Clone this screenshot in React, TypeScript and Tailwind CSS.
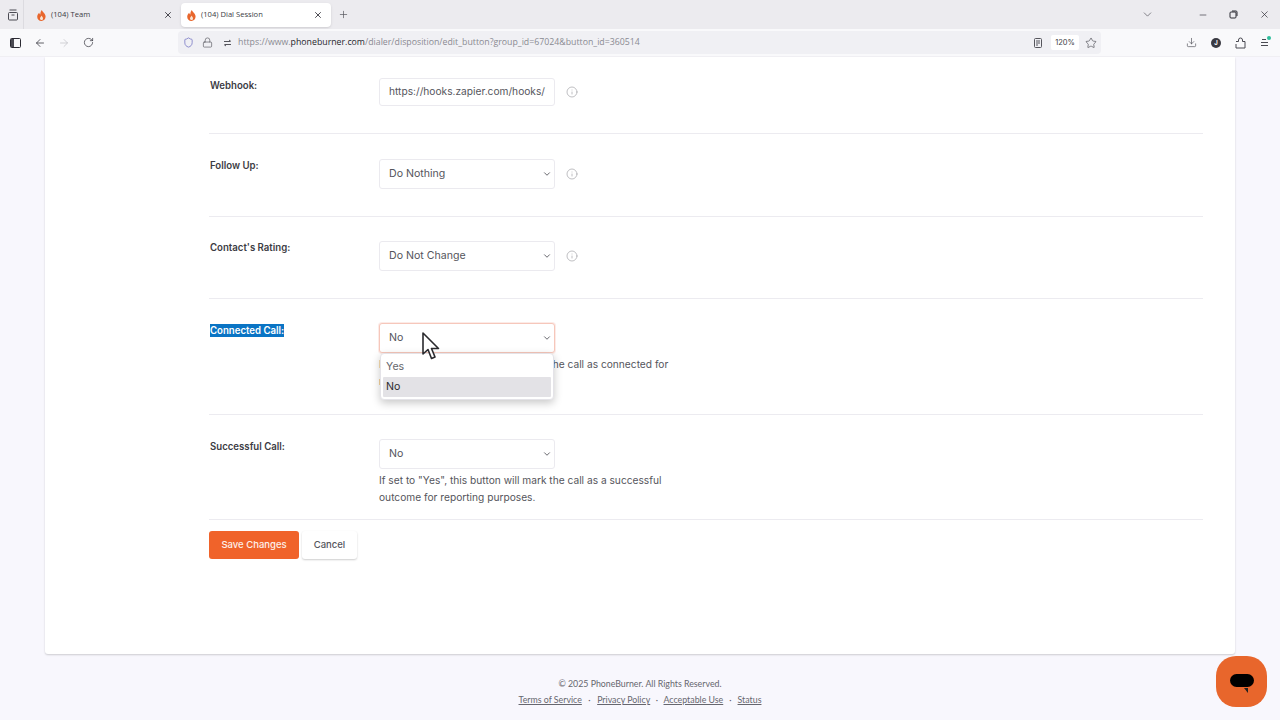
import React from "react";
import { X, Plus, ArrowLeft, ArrowRight, RotateCw, Lock, Star, Download, ChevronDown, Minus, Info, ShieldIcon as Shield } from "lucide-react";

const Flame = () => (
  <svg width="9" height="11" viewBox="0 0 9 11" className="shrink-0">
    <path d="M4.8 0C5 1.6 8.6 3.4 8.6 6.6 8.6 9.2 6.8 11 4.4 11 2 11 .2 9.2.2 6.8.2 5 1.2 3.8 2.2 2.8 2.4 3.8 2.8 4.2 3.4 4.4 3.2 2.8 3.8 1 4.8 0Z" fill="#e8662c" />
    <path d="M4.5 5.5C4.8 6.6 6 7 6 8.4 6 9.4 5.3 10 4.5 10 3.6 10 3 9.4 3 8.5 3 7.4 4.2 6.8 4.5 5.5Z" fill="#f8e3d2" />
  </svg>
);

const Tab = ({ title, active }: { title: string; active?: boolean }) => (
  <div className={`w-[150px] h-[24px] mt-[1px] mr-[-1px] ml-[1px] flex items-center pl-[6px] pr-[8px] rounded-[4px] ${active ? "bg-white shadow-sm" : ""}`}>
    <Flame />
    <span className="ml-[5px] flex-1 text-[#3c3c44] text-[7.6px]">{title}</span>
    <X size={10} strokeWidth={2} className="text-[#2b2a33]" />
  </div>
);

const Row = ({ label, h, children, selected }: { label: string; h: string; children: React.ReactNode; selected?: boolean }) => (
  <div className={`flex border-b border-[#ecebf0] pl-[1px] ${h}`}>
    <div className="w-[169px] shrink-0 flex items-start">
      <span className={`mt-[1px] text-[9.65px] font-semibold leading-[13px] block ${selected ? "bg-[#0a74c4] text-white" : "text-[#3c3c44]"}`}>{label}</span>
    </div>
    <div className="flex-1">{children}</div>
  </div>
);

const Select = ({ value, hl }: { value: string; hl?: boolean }) => (
  <div className={`w-[176px] h-[30px] rounded-[3px] border flex items-center pl-[9px] pr-[2px] bg-white text-[10.6px] text-[#55555c] ${hl ? "border-[#f6c7bb] shadow-[0_0_0_1px_rgba(246,199,187,0.35)]" : "border-[#ebeaef]"}`}>
    <span className="flex-1">{value}</span>
    <ChevronDown size={10} strokeWidth={2} className="text-[#4a4a52]" />
  </div>
);

const Tip = () => <Info size={12} strokeWidth={1.5} className="text-[#a9a9ae] ml-[11px]" />;

export default function App() {
  return (
    <div className="w-[1280px] h-[720px] overflow-hidden relative bg-[#f8f7fd] font-['Inter',sans-serif]">
      {/* browser chrome */}
      <div className="h-[29px] bg-[#ecebef] flex items-center font-['Open_Sans',sans-serif]">
        <div className="w-[24px] h-[29px] flex items-center justify-center border-r border-[#dcdbe0] ml-0">
          <svg width="12" height="12" viewBox="0 0 12 12" fill="none" stroke="#4a4a52" strokeWidth="1" className="ml-[3px]">
            <rect x="1.5" y="3.5" width="9" height="7.5" rx="1" />
            <path d="M2.5 1h7M4.5 6h3" />
          </svg>
        </div>
        <div className="w-[6px]" />
        <Tab title="(104) Team" />
        <Tab title="(104) Dial Session" active />
        <Plus size={11} className="text-[#55555c] ml-[8px]" strokeWidth={1.5} />
        <div className="flex-1" />
        <ChevronDown size={13} strokeWidth={1.3} className="text-[#55555c] mr-[44px]" />
        <Minus size={10} strokeWidth={1.5} className="text-[#2b2a33] mr-[21px]" />
        <svg width="9" height="9" viewBox="0 0 9 9" fill="none" stroke="#2b2a33" strokeWidth="1" className="mr-[21px]">
          <rect x="1" y="2" width="6" height="6" rx="1" />
          <path d="M3 1h4a1 1 0 0 1 1 1v4" />
        </svg>
        <X size={11} strokeWidth={1.5} className="text-[#2b2a33] mr-[10px]" />
      </div>
      <div className="h-[28px] bg-[#f9f9fb] flex items-center relative border-b border-[#f0eff3]">
        <svg width="11" height="10" viewBox="0 0 11 10" fill="none" className="ml-[10px]">
          <rect x=".5" y=".5" width="10" height="9" rx="1" stroke="#2b2a33" />
          <rect x="1" y="1" width="3" height="8" fill="#4a4a52" />
        </svg>
        <ArrowLeft size={12} strokeWidth={1.6} className="text-[#3a3a42] ml-[13px]" />
        <ArrowRight size={12} strokeWidth={1.4} className="text-[#c0c0c5] ml-[12px]" />
        <RotateCw size={11} strokeWidth={1.6} className="text-[#3a3a42] ml-[13px]" />
        <div className="ml-[84px] w-[923px] h-[23px] bg-[#f0f0f4] rounded-[4px] flex items-center pl-[5px] pr-[3px]">
          <Shield size={11} strokeWidth={1.4} className="text-[#5b5bb8]" />
          <Lock size={11} strokeWidth={1.4} className="text-[#55555c] ml-[8px]" />
          <svg width="9" height="8" viewBox="0 0 9 8" fill="none" stroke="#55555c" strokeWidth="1" className="ml-[10px]">
            <path d="M1 2.5h6M6 1l2 1.5M8 5.5H2M3 7 1 5.5" />
          </svg>
          <span className="ml-[6px] text-[8.78px] text-[#8a8a92] font-['Open_Sans',sans-serif] whitespace-nowrap">
            https://www.<span className="text-[#26262c]">phoneburner.com</span>/dialer/disposition/edit_button?group_id=67024&amp;button_id=360514
          </span>
          <div className="flex-1" />
          <svg width="8" height="10" viewBox="0 0 8 10" fill="none" stroke="#55555c" strokeWidth="1">
            <rect x=".5" y=".5" width="7" height="9" rx="1" />
            <path d="M2 3h4M2 5h4M2 7h2" />
          </svg>
          <div className="ml-[9px] w-[28px] h-[15px] bg-white rounded-[2px] text-[7.5px] text-[#3c3c44] flex items-center justify-center">120%</div>
          <Star size={12} strokeWidth={1.3} className="text-[#45454d] ml-[6px] mr-[1px]" />
        </div>
        <Download size={11} strokeWidth={1.5} className="text-[#55555c] ml-[85px]" />
        <div className="ml-[14px] w-[10px] h-[10px] rounded-full bg-[#3a3a42] flex items-center justify-center text-white text-[6px] font-bold">J</div>
        <svg width="11" height="12" viewBox="0 0 11 12" fill="none" stroke="#4a4a52" strokeWidth="1" className="ml-[14px]">
          <path d="M1 4.5h2.5V3a2 2 0 0 1 4 0v1.5H10V11H1V7" />
        </svg>
        <div className="relative ml-[14px]">
          <svg width="9" height="9" viewBox="0 0 9 9" fill="none" stroke="#4a4a52" strokeWidth="1">
            <path d="M2 1.5h4M1 4.5h7M1 7.5h7" />
          </svg>
          <div className="absolute top-[-2px] right-[-2px] w-[4px] h-[4px] rounded-full bg-[#2ebd9b]" />
        </div>
      </div>

      {/* page */}
      <div className="ml-[45px] w-[1190px] h-[597px] bg-white rounded-b-[3px] shadow-[0_1px_2px_rgba(0,0,0,0.18)] pl-[164px] pr-[32px] pt-[21px]">
        <Row label="Webhook:" h="h-[56px]">
          <div className="flex items-center h-[30px] -mt-[1px]">
            <div className="w-[176px] h-[28px] rounded-[3px] border border-[#ebeaef] flex items-center pl-[9px] text-[10.2px] text-[#55555c] whitespace-nowrap overflow-hidden">https://hooks.zapier.com/hooks/</div>
            <Tip />
          </div>
        </Row>
        <Row label="Follow Up:" h="h-[83px] pt-[24px]">
          <div className="flex items-center mt-[1px]"><Select value="Do Nothing" /><Tip /></div>
        </Row>
        <Row label="Contact's Rating:" h="h-[82px] pt-[23px]">
          <div className="flex items-center mt-[1px]"><Select value="Do Not Change" /><Tip /></div>
        </Row>
        <Row label="Connected Call:" h="h-[116px] pt-[24px]" selected>
          <Select value="No" hl />
          <p className="w-[300px] mt-[3px] text-[10.2px] leading-[17px] text-[#55555c]">If set to "Yes", this button will mark the call as connected for reporting purposes.</p>
        </Row>
        <Row label="Successful Call:" h="h-[105px] pt-[24px]">
          <Select value="No" />
          <p className="w-[300px] mt-[3px] text-[10.2px] leading-[17px] text-[#55555c]">If set to "Yes", this button will mark the call as a successful outcome for reporting purposes.</p>
        </Row>
        <div className="flex mt-[11px]">
          <button className="w-[90px] h-[28px] rounded-[3px] bg-[#f0632a] text-[#fdf0ea] text-[9.5px] font-medium">Save Changes</button>
          <button className="ml-[3px] w-[55px] h-[28px] rounded-[3px] bg-white shadow-[0_1px_2px_rgba(0,0,0,0.2)] text-[#55555c] text-[9.5px] font-medium">Cancel</button>
        </div>
      </div>

      {/* footer */}
      <div className="w-[1280px] text-center font-['Lato',sans-serif] text-[8.8px] text-[#66666e] pt-[24px] leading-[12px]">
        <div>© 2025 PhoneBurner. All Rights Reserved.</div>
        <div className="mt-[4px] flex justify-center">
          <span className="underline">Terms of Service</span>
          <span className="mx-[6.5px]">·</span>
          <span className="underline">Privacy Policy</span>
          <span className="mx-[5.5px]">·</span>
          <span className="underline">Acceptable Use</span>
          <span className="mx-[6px]">·</span>
          <span className="underline">Status</span>
        </div>
      </div>

      {/* open dropdown */}
      <div className="absolute left-[380px] top-[353px] w-[174px] h-[47px] bg-white rounded-[4px] border border-[#e4e3e8] shadow-[0_3px_8px_rgba(0,0,0,0.22)] pt-[2px] px-[2px] text-[10.6px] text-[#3c3c44]">
        <div className="h-[21px] pl-[3px] flex items-center text-[#66666c]">Yes</div>
        <div className="h-[20px] pl-[3px] flex items-center bg-[#e3e2e6] rounded-[1px] text-[#2b2b30]">No</div>
      </div>

      {/* cursor */}
      <svg width="20" height="30" viewBox="0 0 20 30" className="absolute left-[422px] top-[332px]">
        <path d="M1 1V22L6 17.5 9.5 26.5 13 25 9.5 16.5H16.5Z" fill="#fff" stroke="#2a2a2e" strokeWidth="1.6" strokeLinejoin="round" />
      </svg>

      {/* chat */}
      <div className="absolute left-[1216px] top-[656px] w-[51px] h-[51px] rounded-[20px] bg-[#e8662c] flex items-center justify-center">
        <svg width="26" height="22" viewBox="0 0 26 22">
          <rect x="1" y="3" width="24" height="13" rx="6.5" fill="#000" />
          <path d="M15 17h4v5Z" fill="#222" />
        </svg>
      </div>
    </div>
  );
}
